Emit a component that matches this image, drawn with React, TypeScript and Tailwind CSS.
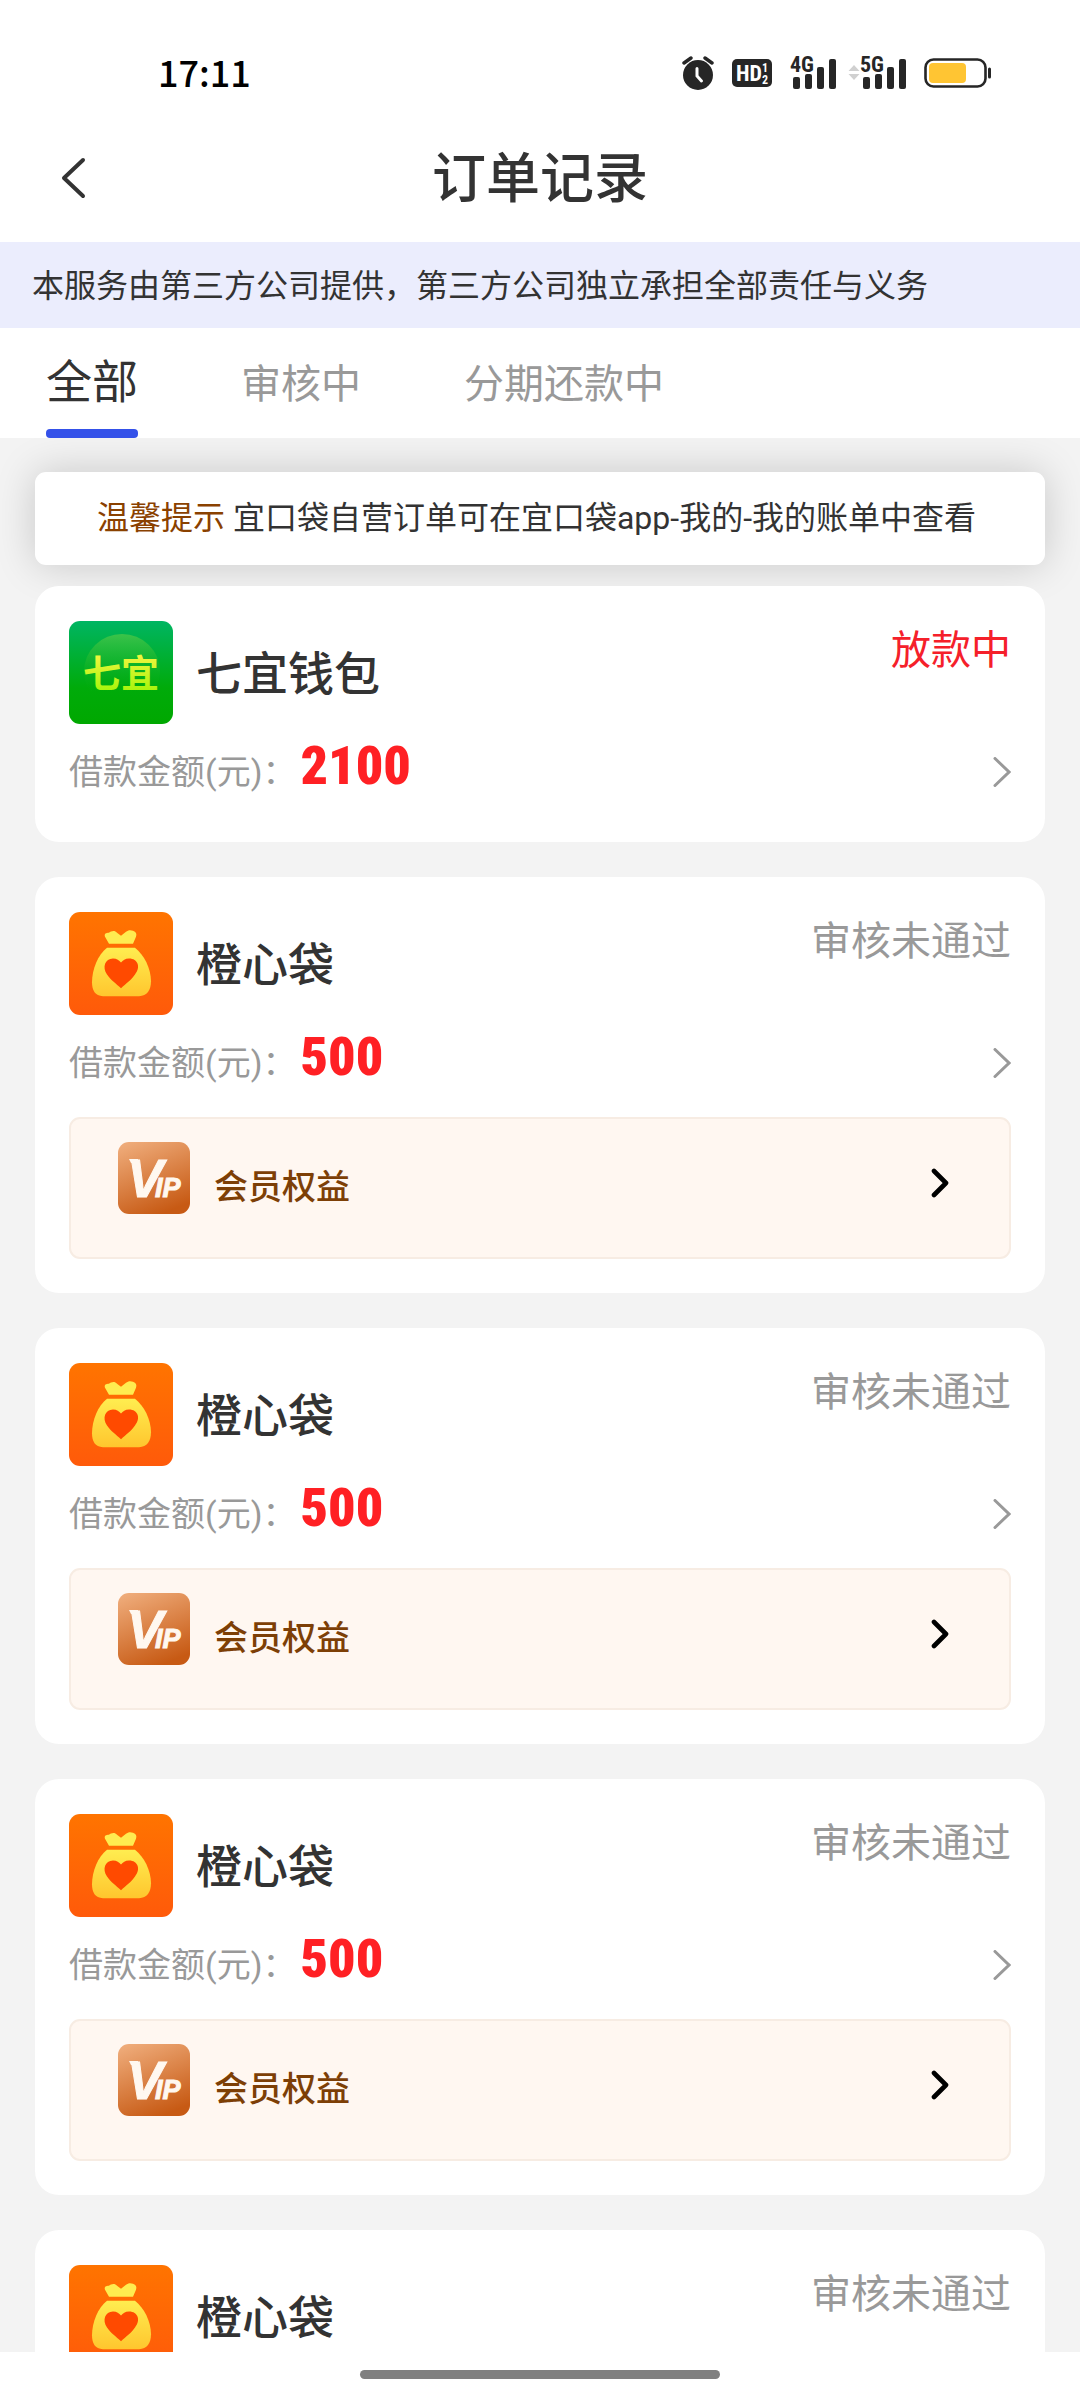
import { useState } from 'react';

type OrderStatus = 'lending' | 'rejected';

interface Order {
  id: number;
  name: string;
  logo: 'qiyi' | 'chengxin';
  amount: number;
  status: OrderStatus;
  hasVip: boolean;
}

const TABS = [
  { value: 'all', label: '全部' },
  { value: 'review', label: '审核中' },
  { value: 'installment', label: '分期还款中' },
];

const STATUS_CONFIG = {
  lending: { label: '放款中', className: 'text-[#f5202a]' },
  rejected: { label: '审核未通过', className: 'text-[#999999]' },
};

const ORDERS: Order[] = [
  { id: 1, name: '七宜钱包', logo: 'qiyi', amount: 2100, status: 'lending', hasVip: false },
  { id: 2, name: '橙心袋', logo: 'chengxin', amount: 500, status: 'rejected', hasVip: true },
  { id: 3, name: '橙心袋', logo: 'chengxin', amount: 500, status: 'rejected', hasVip: true },
  { id: 4, name: '橙心袋', logo: 'chengxin', amount: 500, status: 'rejected', hasVip: true },
  { id: 5, name: '橙心袋', logo: 'chengxin', amount: 500, status: 'rejected', hasVip: true },
];

const AlarmIcon = () => (
  <svg width="32" height="34" viewBox="0 0 32 34" fill="none">
    <circle cx="16" cy="19" r="15" fill="#262626" />
    <path d="M2 7l7-5M30 7l-7-5" stroke="#262626" strokeWidth="3.4" strokeLinecap="round" />
    <path d="M15 12.500v7.500l4.500 5" stroke="#fff" strokeWidth="3" strokeLinecap="round" />
  </svg>
);

const HdIcon = () => (
  <svg
    width="40"
    height="28"
    viewBox="0 0 40 28"
    className="overflow-visible font-['Roboto_Condensed','Roboto',sans-serif] font-bold"
  >
    <rect width="40" height="28" rx="5" fill="#262626" />
    <text x="4" y="22" fontSize="22" fill="#fff">HD</text>
    <text x="30" y="13" fontSize="12" fill="#fff">1</text>
    <text x="30" y="25" fontSize="12" fill="#fff">2</text>
  </svg>
);

const SignalIcon = ({ label }: { label: string }) => (
  <svg
    width="46"
    height="32"
    viewBox="0 0 46 32"
    className="overflow-visible font-['Roboto_Condensed','Roboto',sans-serif] font-bold"
  >
    <rect x="3" y="20" width="7" height="12" rx="2" fill="#262626" />
    <rect x="15" y="17" width="7" height="15" rx="2" fill="#262626" />
    <rect x="27" y="10" width="7" height="22" rx="2" fill="#262626" />
    <rect x="39" y="2" width="7" height="30" rx="2" fill="#262626" />
    <text
      x="0"
      y="15"
      fontSize="22"
      fill="#262626"
      stroke="#fff"
      strokeWidth="3"
      paintOrder="stroke"
    >
      {label}
    </text>
  </svg>
);

const DataArrowIcon = () => (
  <svg className="ml-3" width="12" height="16" viewBox="0 0 12 16" fill="#d0d0d0">
    <path d="M6 0l5.500 6h-11zM6 15l5.500-6h-11z" />
  </svg>
);

const BatteryIcon = () => (
  <svg width="68" height="30" viewBox="0 0 68 30" fill="none">
    <rect x="1.500" y="1.500" width="60" height="27" rx="8" stroke="#262626" strokeWidth="2.600" />
    <rect x="5" y="5" width="37" height="20" rx="4" fill="#ffc533" />
    <path d="M65.500 11v8" stroke="#262626" strokeWidth="3" strokeLinecap="round" />
  </svg>
);

const QiyiLogo = () => (
  <svg
    className="h-[103px] w-[104px] shrink-0 rounded-[11px]"
    viewBox="0 0 104 104"
    preserveAspectRatio="none"
  >
    <defs>
      <linearGradient id="qiyi-bg" x1="0" y1="0" x2="0" y2="1">
        <stop offset="0" stopColor="#00b562" />
        <stop offset="0.65" stopColor="#00ab0a" />
        <stop offset="1" stopColor="#00a800" />
      </linearGradient>
      <linearGradient id="qiyi-ball" x1="0" y1="0" x2="0" y2="1">
        <stop offset="0" stopColor="#3cc34a" />
        <stop offset="0.8" stopColor="#00ab0a" stopOpacity="0" />
      </linearGradient>
      <linearGradient id="qiyi-text" x1="0" y1="0" x2="0" y2="1">
        <stop offset="0.1" stopColor="#eef53c" />
        <stop offset="0.9" stopColor="#a4f50a" />
      </linearGradient>
    </defs>
    <rect width="104" height="104" fill="url(#qiyi-bg)" />
    <circle cx="53" cy="51" r="38" fill="url(#qiyi-ball)" />
    <text
      x="52"
      y="67"
      textAnchor="middle"
      fontSize="38"
      fontWeight="700"
      fill="url(#qiyi-text)"
    >
      七宜
    </text>
  </svg>
);

const ChengxinLogo = () => (
  <svg
    className="h-[103px] w-[104px] shrink-0 rounded-[11px]"
    viewBox="0 0 104 104"
    preserveAspectRatio="none"
  >
    <defs>
      <linearGradient id="cx-bg" x1="0" y1="0" x2="0" y2="1">
        <stop offset="0" stopColor="#ff7400" />
        <stop offset="1" stopColor="#ff5a0a" />
      </linearGradient>
      <linearGradient id="cx-bag" x1="0" y1="0" x2="0" y2="1">
        <stop offset="0" stopColor="#ffed50" />
        <stop offset="1" stopColor="#ffc62e" />
      </linearGradient>
    </defs>
    <rect width="104" height="104" fill="url(#cx-bg)" />
    <path
      d="M40 32l-4-7c-1-3 1-4 4-4 2-2 6-3 8 0l4 3 5-4c2-2 5-2 7-1 3 1 4 3 3 6l-3 7z"
      fill="#ffec50"
    />
    <path
      d="M38 36h28c9 7 16 21 16 34 0 9-4 15-12 15H34c-8 0-11-6-11-14 0-13 6-28 15-35z"
      fill="url(#cx-bag)"
    />
    <path
      d="M52 77c-5-5-10-8-14-14-5-7-2-16 6-16 4 0 6 2 8 4 2-2 4-4 8-4 9 0 12 9 6 16-4 6-9 9-14 14z"
      fill="#ff4a00"
    />
  </svg>
);

const VipIcon = () => (
  <svg
    className="size-[72px] shrink-0 rounded-[11px] font-['Liberation_Sans',sans-serif]"
    viewBox="0 0 72 72"
    fontWeight="700"
    fontStyle="italic"
  >
    <defs>
      <linearGradient id="vip-bg" x1="0.2" y1="0" x2="0.6" y2="1">
        <stop offset="0" stopColor="#eeaa78" />
        <stop offset="1" stopColor="#c75a14" />
      </linearGradient>
    </defs>
    <rect width="72" height="72" fill="url(#vip-bg)" />
    <path d="M11 17h9v4h-7z" fill="#fff8f0" />
    <text x="9" y="55" fontSize="54" fill="#fff8f0" stroke="#fff8f0" strokeWidth="1">
      V
      <tspan dx="-8" fontSize="27">IP</tspan>
    </text>
  </svg>
);

const StatusBar = () => (
  <div className="flex h-[114px] items-center justify-between pt-8 pr-[88px] pl-[158px]">
    <span className="pb-1 font-['Noto_Sans_CJK_SC',sans-serif] text-[36px] leading-[56px] font-medium text-black">
      17:11
    </span>
    <div className="flex items-center gap-[18px]">
      <AlarmIcon />
      <HdIcon />
      <div className="flex items-center">
        <SignalIcon label="4G" />
        <DataArrowIcon />
        <SignalIcon label="5G" />
      </div>
      <BatteryIcon />
    </div>
  </div>
);

const OrderCard = ({ order }: { order: Order }) => {
  const status = STATUS_CONFIG[order.status];

  return (
    <li className="rounded-[24px] bg-white px-[34px] pt-[35px] pb-[34px]">
      <div className="flex">
        {order.logo === 'qiyi' ? <QiyiLogo /> : <ChengxinLogo />}
        <h2 className="ml-[23px] flex-1 self-center pt-0.5 text-[46px] leading-[56px] font-medium text-[#333333]">
          {order.name}
        </h2>
        <span className={`pt-0.5 text-[40px] leading-[56px] ${status.className}`}>
          {status.label}
        </span>
      </div>
      <a href="#order" className="flex h-[84px] items-center justify-between pt-3">
        <span className="flex items-baseline pb-1.5 text-[34px] leading-[56px] text-[#999999]">
          借款金额(元)：
          <strong className="ml-1 font-['Roboto_Condensed','Roboto',sans-serif] text-[54px] font-black text-[#ff2024]">
            {order.amount}
          </strong>
        </span>
        <svg width="18" height="30" viewBox="0 0 18 30" fill="none">
          <path d="M2 1.500L16 15 2 28.500" stroke="#999" strokeWidth="3" strokeLinecap="round" />
        </svg>
      </a>
      {order.hasVip && (
        <a
          href="#vip"
          className="mt-[18px] flex h-[142px] items-start rounded-[11px] border-2 border-[#f7ece3] bg-[#fff7f1] pt-[23px] pr-[60px] pl-[47px]"
        >
          <VipIcon />
          <span className="ml-6 flex-1 pt-[17px] text-[34px] leading-[56px] font-medium text-[#7d3f06]">
            会员权益
          </span>
          <svg className="mt-[26px]" width="18" height="30" viewBox="0 0 18 30" fill="none">
            <path
              d="M3 3l12 12L3 27"
              stroke="#000"
              strokeWidth="4.600"
              strokeLinecap="round"
              strokeLinejoin="round"
            />
          </svg>
        </a>
      )}
    </li>
  );
};

const App = () => {
  const [currentTab, setCurrentTab] = useState('all');

  return (
    <div className="flex h-screen flex-col bg-white font-['Roboto','Noto_Sans_CJK_SC',sans-serif]">
      <StatusBar />
      <header className="grid h-32 grid-cols-[1fr_auto_1fr] items-center px-[61px]">
        <button type="button" aria-label="返回">
          <svg width="26" height="42" viewBox="0 0 26 42" fill="none">
            <path
              d="M22 3L3 21l19 18"
              stroke="#333"
              strokeWidth="4"
              strokeLinecap="round"
              strokeLinejoin="round"
            />
          </svg>
        </button>
        <h1 className="pt-0.5 text-[54px] font-medium text-[#333333]">订单记录</h1>
      </header>
      <p className="bg-[#ebedfd] px-8 pt-4 pb-3.5 text-[32px] leading-[56px] text-[#333333]">
        本服务由第三方公司提供，第三方公司独立承担全部责任与义务
      </p>

      {/* 订单状态 */}
      <nav className="flex h-[110px] gap-[103px] px-[46px]">
        {TABS.map((tab) => (
          <button
            key={tab.value}
            type="button"
            onClick={() => setCurrentTab(tab.value)}
            className={
              currentTab === tab.value
                ? 'flex flex-col justify-between pt-[26px] text-[46px] leading-[56px] text-[#333333]'
                : 'flex flex-col justify-between pt-[29px] text-[40px] leading-[56px] text-[#999999]'
            }
          >
            {tab.label}
            {currentTab === tab.value && (
              <span className="h-[9px] w-full rounded bg-[#3451e9]" />
            )}
          </button>
        ))}
      </nav>

      {/* 订单列表 */}
      <main className="min-h-0 flex-1 overflow-y-auto bg-[#f3f3f3] px-[35px] pt-[34px] [scrollbar-width:none]">
        <p className="rounded-[11px] bg-white py-[18px] pl-[62px] text-[32px] leading-[57px] whitespace-nowrap text-[#333333] shadow-[0_0_40px_rgba(0,0,0,0.18)]">
          <span className="text-[#8a4100]">温馨提示</span> 宜口袋自营订单可在宜口袋app-我的-我的账单中查看
        </p>
        <ul className="relative mt-[21px] flex flex-col gap-[35px]">
          {ORDERS.map((order) => (
            <OrderCard key={order.id} order={order} />
          ))}
        </ul>
      </main>
      <footer className="flex h-12 justify-center pt-[18px]">
        <div className="h-[9px] w-1/3 rounded-full bg-[#808080]" />
      </footer>
    </div>
  );
};

export default App;
